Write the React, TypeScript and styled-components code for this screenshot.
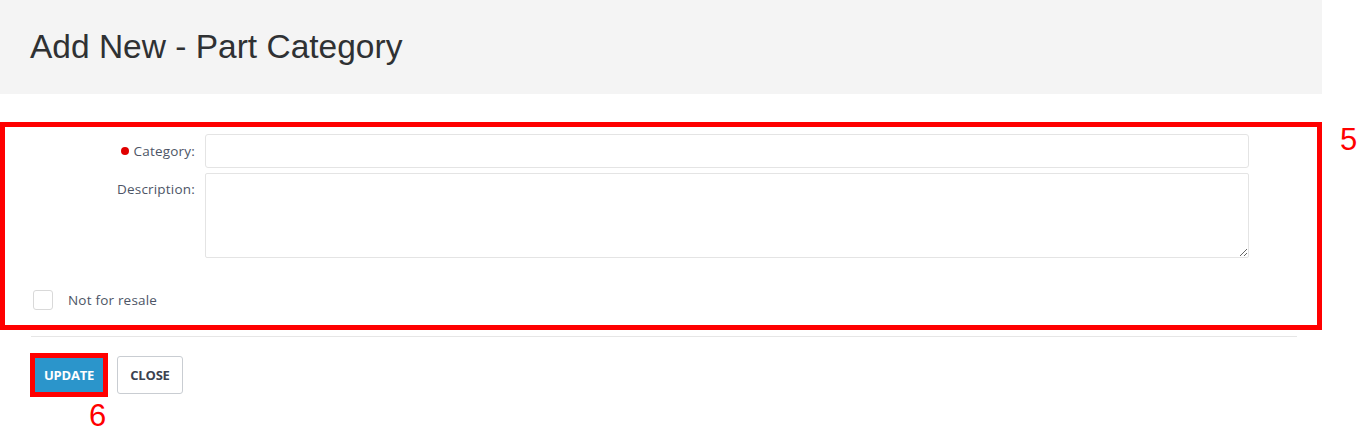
import React from "react";
import styled, { createGlobalStyle } from "styled-components";

const Global = createGlobalStyle`
  html, body { margin: 0; padding: 0; background: #ffffff; }
  * { box-sizing: border-box; }
`;

const Page = styled.div`
  width: 1360px;
  height: 447px;
  overflow: hidden;
  background: #fff;
  font-family: "Open Sans", "Noto Sans", sans-serif;
`;

const Header = styled.header`
  width: 1322px;
  height: 94px;
  background: #f4f4f4;
  display: flex;
  align-items: center;
  padding-left: 30px;
`;

const Title = styled.h1`
  margin: 0;
  font-family: "Liberation Sans", Arial, sans-serif;
  font-weight: 400;
  font-size: 33.5px;
  color: #2f3133;
  letter-spacing: 0;
`;

const FormSection = styled.section`
  position: relative;
  margin-top: 28px;
  width: 1322px;
  height: 208px;
  border: 5px solid #ff0000;
  padding: 7px 0 0 0;
  display: flex;
  flex-direction: column;
`;

const Annotation = styled.span<{ $top: string; $left: string }>`
  position: absolute;
  top: ${(p) => p.$top};
  left: ${(p) => p.$left};
  font-family: "Liberation Sans", Arial, sans-serif;
  font-size: 31px;
  line-height: 30px;
  color: #ff0000;
`;

const FieldRow = styled.div<{ $gap?: number }>`
  display: grid;
  grid-template-columns: 190px 1044px;
  column-gap: 10px;
  margin-bottom: ${(p) => p.$gap ?? 5}px;
`;

const Label = styled.label<{ $center?: boolean }>`
  display: flex;
  justify-content: flex-end;
  align-items: ${(p) => (p.$center ? "center" : "flex-start")};
  padding-top: ${(p) => (p.$center ? "0" : "7px")};
  font-size: 13.5px;
  letter-spacing: 0.2px;
  color: #4d5566;
  gap: 5px;
`;

const RequiredDot = styled.span`
  width: 8px;
  height: 8px;
  border-radius: 50%;
  background: #e00000;
  display: inline-block;
`;

const TextInput = styled.input`
  height: 34px;
  width: 100%;
  border: 1px solid #e4e4e4;
  border-radius: 3px;
  background: #fff;
  padding: 0 8px;
  outline: none;
`;

const TextArea = styled.textarea`
  height: 85px;
  width: 100%;
  border: 1px solid #e4e4e4;
  border-radius: 2px;
  background: #fff;
  padding: 6px 8px;
  outline: none;
  display: block;
  margin: 0;
`;

const CheckRow = styled.label`
  display: flex;
  align-items: center;
  gap: 15px;
  margin-top: 32px;
  padding-left: 28px;
  font-size: 13.5px;
  letter-spacing: 0.2px;
  color: #4d5566;
`;

const CheckBox = styled.span`
  width: 20px;
  height: 20px;
  border: 1px solid #d9d9d9;
  border-radius: 3px;
  background: #fff;
  display: inline-block;
`;

const Divider = styled.hr`
  margin: 6px 0 0 31px;
  width: 1266px;
  border: none;
  border-top: 1px solid #e6e6e6;
  height: 0;
`;

const ButtonBar = styled.div`
  display: flex;
  align-items: center;
  gap: 9px;
  margin: 16px 0 0 30px;
`;

const Highlight = styled.div`
  position: relative;
  border: 5px solid #ff0000;
  display: flex;
`;

const Button = styled.button<{ $primary?: boolean }>`
  font-family: "Open Sans", "Noto Sans", sans-serif;
  font-weight: 700;
  font-size: 13px;
  letter-spacing: -0.2px;
  cursor: pointer;
  border-radius: 3px;
  padding: 0;
  ${(p) =>
    p.$primary
      ? `
    width: 68px;
    height: 34px;
    background: #2b95cb;
    color: #ffffff;
    border: none;
    border-radius: 0;
  `
      : `
    width: 66px;
    height: 38px;
    background: #ffffff;
    color: #3b4250;
    border: 1px solid #c9cdd2;
  `}
`;

export default function App() {
  return (
    <Page>
      <Global />
      <Header>
        <Title>Add New - Part Category</Title>
      </Header>
      <FormSection>
        <Annotation $top="-2px" $left="calc(100% + 23px)">5</Annotation>
        <FieldRow>
          <Label $center>
            <RequiredDot />
            Category:
          </Label>
          <TextInput type="text" />
        </FieldRow>
        <FieldRow $gap={0}>
          <Label>Description:</Label>
          <TextArea />
        </FieldRow>
        <CheckRow>
          <CheckBox />
          Not for resale
        </CheckRow>
      </FormSection>
      <Divider />
      <ButtonBar>
        <Highlight>
          <Button $primary>UPDATE</Button>
          <Annotation $top="43px" $left="54px">6</Annotation>
        </Highlight>
        <Button>CLOSE</Button>
      </ButtonBar>
    </Page>
  );
}
